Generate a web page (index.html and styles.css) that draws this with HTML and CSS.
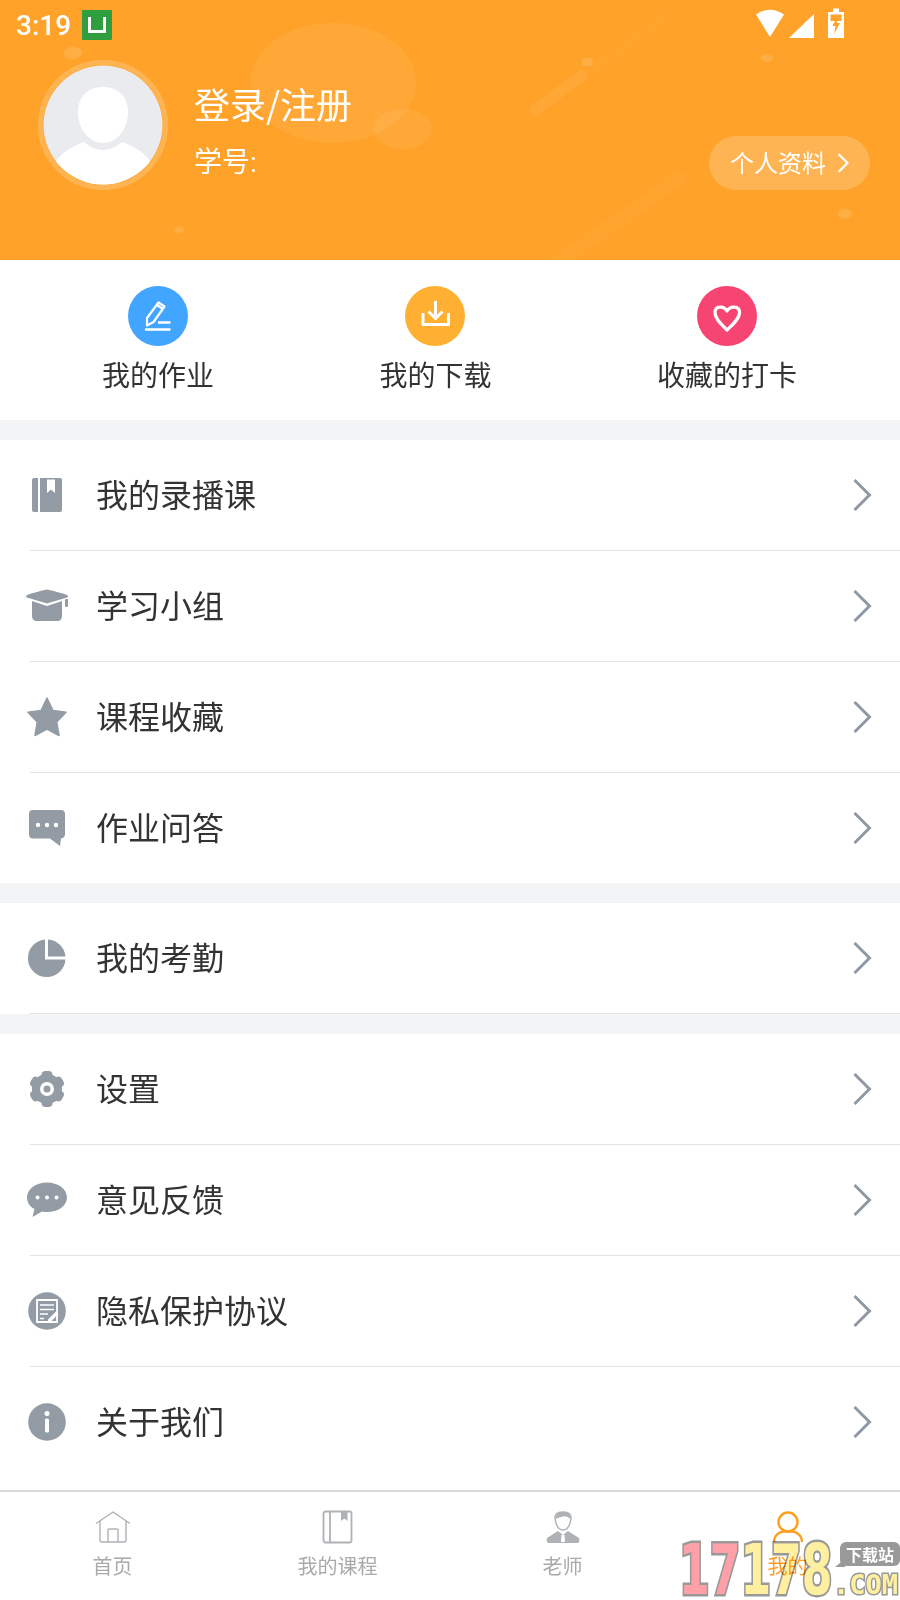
FILE: index.html
```html
<!DOCTYPE html>
<html lang="zh-CN">
  <head>
    <meta charset="UTF-8" />
    <meta name="viewport" content="width=device-width, initial-scale=1.0" />
    <title>我的</title>
    <link rel="stylesheet" href="styles.css">
  </head>
  <body>
    <div class="page">
      <header class="header">
        <svg class="header-decor" viewBox="0 0 900 260" width="900" height="260">
          <g fill="#fff">
            <ellipse cx="333" cy="83" rx="83" ry="60" opacity="0.07" />
            <ellipse cx="403" cy="129" rx="29" ry="20" opacity="0.07" />
            <ellipse cx="73" cy="53" rx="9" ry="6.5" opacity="0.13" />
            <ellipse cx="179" cy="230" rx="5" ry="3.5" opacity="0.13" />
            <ellipse cx="587" cy="62" rx="6" ry="4.5" opacity="0.13" />
            <ellipse cx="767" cy="58" rx="6" ry="4" opacity="0.13" />
            <ellipse cx="845" cy="214" rx="7" ry="5" opacity="0.13" />
          </g>
          <path d="M535 110L582 76" stroke="#fff" stroke-width="11" stroke-linecap="round" opacity="0.07" />
          <path d="M590 70L672 14" stroke="#fff" stroke-width="8" stroke-linecap="round" opacity="0.015" />
          <path d="M555 264L680 178" stroke="#fff" stroke-width="14" stroke-linecap="round" opacity="0.025" />
        </svg>

        <div class="status-bar">
          <span class="status-time">3:19</span>
          <span class="status-app"><span class="status-app-mark"></span></span>
          <svg class="status-icons" viewBox="0 0 90 30" width="90" height="30">
            <path d="M3 7.500Q17 -2 31 7.500L17 30Z" transform="translate(-1 -1)" fill="#fff" />
            <path d="M60 6V30H35Z" fill="#fff" />
            <path d="M74 4H79V0.500H85V4H90V30H74Z" fill="#fff" />
            <path d="M76.500 6.500H87.500V13H76.500Z" fill="#ffa229" />
            <path d="M83.500 8L78.500 18H81.500L80 26L86 15H82.800Z" fill="#ffa229" />
          </svg>
        </div>

        <div class="profile">
          <svg class="avatar" viewBox="0 0 130 130" width="130" height="130">
            <defs>
              <clipPath id="avatarClip"><circle cx="65" cy="65" r="59.500" /></clipPath>
            </defs>
            <circle cx="65" cy="65" r="62.500" fill="none" stroke="#fff" stroke-opacity="0.2" stroke-width="5" />
            <circle cx="65" cy="65" r="59.500" fill="#e9ebef" />
            <g clip-path="url(#avatarClip)" fill="#fff">
              <path d="M65 27C80 27 90 37 90 52C90 70 78 83 65 83C52 83 40 70 40 52C40 37 50 27 65 27Z" />
              <path d="M16 104Q24 90 46 82Q55 90 65 90Q75 90 84 82Q106 90 114 104V130H16Z" />
            </g>
          </svg>
          <div class="profile-text">
            <div class="profile-name">登录/注册</div>
            <div class="profile-id">学号:</div>
          </div>
          <div class="profile-btn">
            <span>个人资料</span>
            <svg viewBox="0 0 12 20" width="12" height="20">
              <path d="M1.500 1L10.500 10L1.500 19" fill="none" stroke="#fff" stroke-width="2.200" />
            </svg>
          </div>
        </div>
      </header>

      <div class="quick">
        <div class="quick-item">
          <svg class="quick-icon" viewBox="0 0 60 60" width="60" height="60">
            <circle cx="30" cy="30" r="30" fill="#42a5ff" />
            <g fill="none" stroke="#fff">
              <path d="M19 39.500V32L30.500 16.500L36.500 20.500L25.500 36Z" stroke-width="2.200" stroke-linejoin="round" />
              <path d="M29 19L35 23" stroke-width="2.500" />
              <path d="M30 36.500H42.500M17 43.500H42.500" stroke-width="2.400" />
            </g>
          </svg>
          <span>我的作业</span>
        </div>
        <div class="quick-item">
          <svg class="quick-icon" viewBox="0 0 60 60" width="60" height="60">
            <circle cx="30" cy="30" r="30" fill="#ffb033" />
            <g fill="none" stroke="#fff" stroke-width="3">
              <path d="M18 27V38.500H43.500V27" stroke-linejoin="round" />
              <path d="M30.500 15V32M23.500 25.500L30.500 32.500L37.500 25.500" />
            </g>
          </svg>
          <span>我的下载</span>
        </div>
        <div class="quick-item">
          <svg class="quick-icon" viewBox="0 0 60 60" width="60" height="60">
            <circle cx="30" cy="30" r="30" fill="#f64572" />
            <path d="M30 25C27 19.500 18 19.500 18 26.500C18 33 25 39 30 44C35 39 42.500 33 42.500 26.500C42.500 19.500 33 19.500 30 25Z" fill="none" stroke="#fff" stroke-width="3.200" stroke-linejoin="round" />
          </svg>
          <span>收藏的打卡</span>
        </div>
      </div>

      <div class="list">
        <div class="row">
          <svg class="row-icon" viewBox="0 0 48 48" width="48" height="48">
            <path d="M11 7H15V41H11A2 2 0 0 1 9 39V9A2 2 0 0 1 11 7Z" />
            <path d="M17 7H37A2 2 0 0 1 39 9V39A2 2 0 0 1 37 41H17Z" />
            <path d="M24 8.500H32V22L28 18.500L24 22Z" fill="#fff" />
          </svg>
          <span class="row-label">我的录播课</span>
          <svg class="row-arrow" viewBox="0 0 20 34" width="20" height="34">
            <path d="M2.500 2L17.500 17L2.500 32" />
          </svg>
        </div>
        <div class="row">
          <svg class="row-icon" viewBox="0 0 48 48" width="48" height="48">
            <path d="M24 7.500Q36 10 44 13Q46 14.500 44 15.500Q36 18 24 21.500Q12 18 4 15.500Q2 14.500 4 13Q12 10 24 7.500Z" />
            <path d="M9 19L24 24L39 19V34Q39 39 34 39H14Q9 39 9 34Z" />
            <rect x="42" y="17" width="3" height="8" rx="1" />
          </svg>
          <span class="row-label">学习小组</span>
          <svg class="row-arrow" viewBox="0 0 20 34" width="20" height="34">
            <path d="M2.500 2L17.500 17L2.500 32" />
          </svg>
        </div>
        <div class="row">
          <svg class="row-icon" viewBox="0 0 48 48" width="48" height="48">
            <path d="M24 5L30 17.500L43 19.300L33.700 29L36 42.500L24 36L12 42.500L14.300 29L5 19.300L18 17.500Z" stroke="#939ba5" stroke-width="1.500" stroke-linejoin="round" />
          </svg>
          <span class="row-label">课程收藏</span>
          <svg class="row-arrow" viewBox="0 0 20 34" width="20" height="34">
            <path d="M2.500 2L17.500 17L2.500 32" />
          </svg>
        </div>
        <div class="row row-last">
          <svg class="row-icon" viewBox="0 0 48 48" width="48" height="48">
            <path d="M10 6H38Q42 6 42 10V30Q42 34 38 34.500L37 42L27 34.500H10Q6 34.500 6 30V10Q6 6 10 6Z" />
            <g fill="#fff">
              <circle cx="15" cy="21" r="2.200" />
              <circle cx="24" cy="21" r="2.200" />
              <circle cx="33" cy="21" r="2.200" />
            </g>
          </svg>
          <span class="row-label">作业问答</span>
          <svg class="row-arrow" viewBox="0 0 20 34" width="20" height="34">
            <path d="M2.500 2L17.500 17L2.500 32" />
          </svg>
        </div>
      </div>

      <div class="list">
        <div class="row">
          <svg class="row-icon" viewBox="0 0 48 48" width="48" height="48">
            <path d="M22 5.500V25.500H42.500A18.800 18.800 0 1 1 22 5.500Z" />
            <path d="M25 5.500A18.800 18.800 0 0 1 42.500 22.500H25Z" />
          </svg>
          <span class="row-label">我的考勤</span>
          <svg class="row-arrow" viewBox="0 0 20 34" width="20" height="34">
            <path d="M2.500 2L17.500 17L2.500 32" />
          </svg>
        </div>
      </div>

      <div class="list list-end">
        <div class="row">
          <svg class="row-icon" viewBox="0 0 48 48" width="48" height="48">
            <circle cx="24" cy="24" r="15" />
            <rect x="18.500" y="6" width="11" height="36" rx="4" />
            <rect x="18.500" y="6" width="11" height="36" rx="4" transform="rotate(60 24 24)" />
            <rect x="18.500" y="6" width="11" height="36" rx="4" transform="rotate(120 24 24)" />
            <circle cx="24" cy="24" r="7" fill="#fff" />
            <circle cx="24" cy="24" r="3.500" />
          </svg>
          <span class="row-label">设置</span>
          <svg class="row-arrow" viewBox="0 0 20 34" width="20" height="34">
            <path d="M2.500 2L17.500 17L2.500 32" />
          </svg>
        </div>
        <div class="row">
          <svg class="row-icon" viewBox="0 0 48 48" width="48" height="48">
            <path d="M24 6.500C35 6.500 44 13 44 21.500C44 30 35 36 24 36Q21.500 36 19 35.500L9.500 41L11.500 33C6.500 30.500 4 26 4 21.500C4 13 13 6.500 24 6.500Z" />
            <g fill="#fff">
              <circle cx="14.500" cy="21.500" r="2" />
              <circle cx="24" cy="21.500" r="2" />
              <circle cx="33.500" cy="21.500" r="2" />
            </g>
          </svg>
          <span class="row-label">意见反馈</span>
          <svg class="row-arrow" viewBox="0 0 20 34" width="20" height="34">
            <path d="M2.500 2L17.500 17L2.500 32" />
          </svg>
        </div>
        <div class="row">
          <svg class="row-icon" viewBox="0 0 48 48" width="48" height="48">
            <circle cx="24" cy="24" r="18.800" />
            <path d="M14 13H34V35H14Z" fill="none" stroke="#fff" stroke-width="1.800" />
            <path d="M17 18H31M17 22.500H31M17 27H25M17 31.500H21" stroke="#fff" stroke-width="1.600" />
            <path d="M25 32.500L33 24.500L35.500 27L27.500 35H25Z" fill="#fff" />
          </svg>
          <span class="row-label">隐私保护协议</span>
          <svg class="row-arrow" viewBox="0 0 20 34" width="20" height="34">
            <path d="M2.500 2L17.500 17L2.500 32" />
          </svg>
        </div>
        <div class="row row-last">
          <svg class="row-icon" viewBox="0 0 48 48" width="48" height="48">
            <circle cx="24" cy="24" r="18.800" />
            <circle cx="24" cy="15.500" r="2.500" fill="#fff" />
            <rect x="22" y="20.500" width="4" height="14" rx="1.500" fill="#fff" />
          </svg>
          <span class="row-label">关于我们</span>
          <svg class="row-arrow" viewBox="0 0 20 34" width="20" height="34">
            <path d="M2.500 2L17.500 17L2.500 32" />
          </svg>
        </div>
      </div>

      <nav class="tabbar">
        <div class="tab">
          <svg viewBox="0 0 36 36" width="36" height="36" fill="none" stroke="#aeb1b5" stroke-width="1.400">
            <path d="M1 14.500L18 3L35 14.500" />
            <path d="M5 12V31Q5 33 7 33H29Q31 33 31 31V12" />
            <path d="M13 33V21Q13 20 14 20H22Q23 20 23 21V33" />
          </svg>
          <span>首页</span>
        </div>
        <div class="tab">
          <svg viewBox="0 0 36 36" width="36" height="36" fill="none" stroke="#aeb1b5" stroke-width="1.800">
            <rect x="3.500" y="2.500" width="28" height="31" rx="2" />
            <path d="M10 2.500V33.500" />
            <path d="M21 2.500H27.500V12L24.200 9.500L21 12Z" fill="#aeb1b5" stroke="none" />
          </svg>
          <span>我的课程</span>
        </div>
        <div class="tab">
          <svg viewBox="0 0 36 36" width="36" height="36">
            <path d="M10 10Q9 3 18 3Q27 3 26 10L25 14Q23 21 18 21Q13 21 11 14Z" fill="#fff" stroke="#aeb1b5" stroke-width="1.400" />
            <path d="M10.500 10Q10 3 18 3Q26 3 25.500 10Q22 6.500 18 7.500Q14 8 10.500 10Z" fill="#aeb1b5" />
            <path d="M13 22L2 29Q1 33 3 34H33Q35 33 34 29L23 22L18 26Z" fill="#aeb1b5" />
            <path d="M16.500 26H19.500L20 33H16Z" fill="#fff" />
          </svg>
          <span>老师</span>
        </div>
        <div class="tab tab-active">
          <svg viewBox="0 0 36 36" width="36" height="36" fill="none" stroke="#ff9d1e" stroke-width="2.400">
            <circle cx="18" cy="13" r="9.500" />
            <path d="M4 33C4 26 10 22.500 14 22.500H22C26 22.500 32 26 32 33" />
          </svg>
          <span>我的</span>
        </div>
      </nav>

      <div class="watermark">
        <div class="wm-digits"><span class="wm-pink">17</span><span class="wm-yellow">178</span></div>
        <div class="wm-bubble">下载站</div>
        <div class="wm-com">.COM</div>
      </div>
    </div>
  </body>
</html>
```

FILE: styles.css
```css
body {
  margin: 0;
  background-color: #f3f4f6;
  font-family: "Noto Sans CJK SC", "Noto Sans", sans-serif;
}
.page {
  position: relative;
  display: flex;
  flex-direction: column;
  width: 900px;
  height: 1600px;
  overflow: hidden;
}

/* header */
.header {
  position: relative;
  height: 260px;
  flex-shrink: 0;
  background-color: #ffa229;
  color: #fff;
}
.header-decor {
  position: absolute;
  top: 0;
  left: 0;
}
.status-bar {
  position: relative;
  display: flex;
  align-items: center;
  height: 50px;
  padding: 0 56px 0 16px;
}
.status-time {
  font-family: Roboto, sans-serif;
  font-size: 28px;
  font-weight: 500;
}
.status-app {
  display: flex;
  align-items: center;
  justify-content: center;
  width: 30px;
  height: 30px;
  margin-left: 11px;
  background-color: #2e9e3f;
  border-radius: 1px;
}
.status-app-mark {
  width: 12px;
  height: 13px;
  border: 3px solid #fff;
  border-top: none;
}
.status-icons {
  margin-left: auto;
  margin-top: -4px;
}
.profile {
  position: relative;
  display: flex;
  margin-top: 10px;
  padding: 0 30px 0 38px;
}
.avatar {
  flex-shrink: 0;
}
.profile-text {
  margin-left: 26px;
}
.profile-name {
  margin-top: 16px;
  font-size: 36px;
  line-height: 54px;
}
.profile-id {
  margin-top: 14px;
  font-family: Roboto, "Noto Sans CJK SC", sans-serif;
  font-size: 28px;
  line-height: 38px;
}
.profile-btn {
  display: flex;
  align-items: center;
  gap: 11px;
  align-self: flex-start;
  height: 54px;
  margin-top: 76px;
  margin-left: auto;
  padding: 0 21px 0 21px;
  background-color: rgba(255, 255, 255, 0.2);
  border-radius: 27px;
  font-size: 24px;
}
.profile-btn span {
  margin-top: -4px;
}

/* quick actions */
.quick {
  display: flex;
  justify-content: space-between;
  height: 160px;
  flex-shrink: 0;
  padding: 0 103px 0 102px;
  background-color: #fff;
  box-sizing: border-box;
}
.quick-item {
  display: flex;
  flex-direction: column;
  align-items: center;
  padding-top: 26px;
  font-size: 28px;
  line-height: 40px;
  color: #333;
}
.quick-icon {
  margin-bottom: 8px;
}

/* list */
.list {
  margin-top: 20px;
  background-color: #fff;
  flex-shrink: 0;
}
.list-end {
  padding-bottom: 13px;
}
.row {
  display: flex;
  align-items: center;
  height: 110px;
  margin-left: 30px;
  border-bottom: 1px solid #e3e4e6;
}
.row-last {
  border-bottom: none;
}
.row-icon {
  margin-left: -7px;
  fill: #939ba5;
}
.row-label {
  margin-left: 25px;
  margin-bottom: 4px;
  font-size: 32px;
  color: #333;
}
.row-arrow {
  margin-left: auto;
  margin-right: 28px;
  fill: none;
  stroke: #8f99a5;
  stroke-width: 3;
}

/* tab bar */
.tabbar {
  position: relative;
  display: grid;
  grid-template-columns: repeat(4, 1fr);
  flex-grow: 1;
  background-color: #fff;
}
.tabbar::before {
  content: "";
  position: absolute;
  top: 0;
  left: 0;
  right: 0;
  height: 2px;
  background-color: #d8d8d8;
}
.tab {
  display: flex;
  flex-direction: column;
  align-items: center;
  justify-content: flex-end;
  padding-bottom: 20px;
  font-size: 20px;
  line-height: 28px;
  color: #aaa;
}
.tab svg {
  margin-bottom: 7px;
}
.tab-active {
  color: #ff9d1e;
}

/* site stamp over the corner */
.watermark {
  position: absolute;
  right: 0;
  bottom: 0;
  width: 223px;
  height: 60px;
  mix-blend-mode: multiply;
}
.wm-digits {
  position: absolute;
  left: 2px;
  top: 2px;
  font-family: "DejaVu Sans", sans-serif;
  font-size: 70px;
  font-weight: bold;
  line-height: 56px;
  white-space: nowrap;
  transform: scaleX(0.63);
  transform-origin: left top;
  -webkit-text-stroke: 5px #999;
  paint-order: stroke fill;
}
.wm-pink {
  color: #ffa0a8;
}
.wm-yellow {
  color: #fff0a0;
}
.wm-bubble {
  position: absolute;
  right: 0;
  top: 2px;
  width: 60px;
  height: 24px;
  background-color: #999;
  border-radius: 6px;
  color: #fff;
  font-size: 16px;
  font-weight: bold;
  line-height: 24px;
  text-align: center;
}
.wm-bubble::after {
  content: "";
  position: absolute;
  left: -5px;
  bottom: -1px;
  border-top: 8px solid transparent;
  border-right: 10px solid #999;
}
.wm-com {
  position: absolute;
  right: 2px;
  bottom: 1px;
  font-family: "DejaVu Sans Mono", monospace;
  font-size: 27px;
  font-weight: bold;
  line-height: 28px;
  color: #fff0a0;
  -webkit-text-stroke: 3px #999;
  paint-order: stroke fill;
}
```
